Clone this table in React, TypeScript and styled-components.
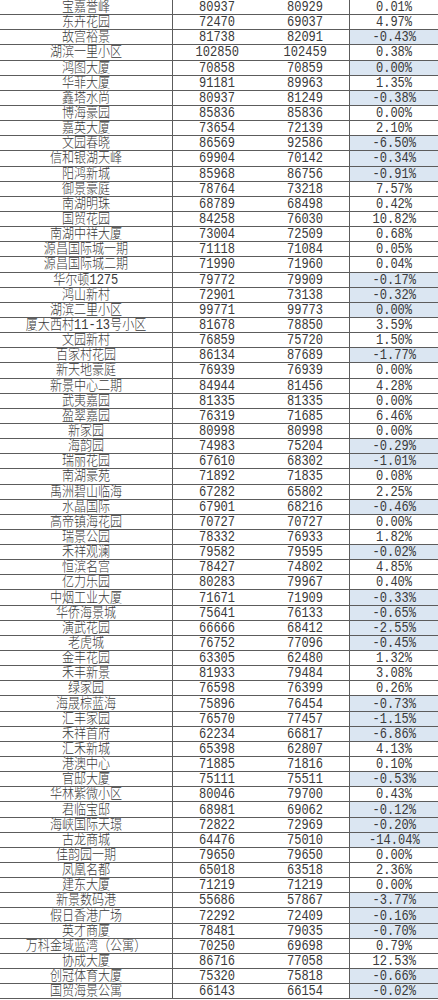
import styled, { createGlobalStyle } from 'styled-components';

const GlobalStyle = createGlobalStyle`
  html, body {
    margin: 0;
    padding: 0;
    background: #ffffff;
  }
  body {
    font-family: "Liberation Mono", "Noto Sans CJK SC", monospace;
    color: #3a3a3a;
  }
`;

type PriceRow = [string, number, number, string];

const rows: PriceRow[] = [
  ['宝嘉誉峰', 80937, 80929, '0.01%'],
  ['东卉花园', 72470, 69037, '4.97%'],
  ['故宫裕景', 81738, 82091, '-0.43%'],
  ['湖滨一里小区', 102850, 102459, '0.38%'],
  ['鸿图大厦', 70858, 70859, '0.00%'],
  ['华菲大厦', 91181, 89963, '1.35%'],
  ['鑫塔水尚', 80937, 81249, '-0.38%'],
  ['博海豪园', 85836, 85836, '0.00%'],
  ['嘉英大厦', 73654, 72139, '2.10%'],
  ['文园春晓', 86569, 92586, '-6.50%'],
  ['信和银湖天峰', 69904, 70142, '-0.34%'],
  ['阳鸿新城', 85968, 86756, '-0.91%'],
  ['御景豪庭', 78764, 73218, '7.57%'],
  ['南湖明珠', 68789, 68498, '0.42%'],
  ['国贸花园', 84258, 76030, '10.82%'],
  ['南湖中祥大厦', 73004, 72509, '0.68%'],
  ['源昌国际城一期', 71118, 71084, '0.05%'],
  ['源昌国际城二期', 71990, 71960, '0.04%'],
  ['华尔顿1275', 79772, 79909, '-0.17%'],
  ['鸿山新村', 72901, 73138, '-0.32%'],
  ['湖滨二里小区', 99771, 99773, '0.00%'],
  ['厦大西村11-13号小区', 81678, 78850, '3.59%'],
  ['文园新村', 76859, 75720, '1.50%'],
  ['百家村花园', 86134, 87689, '-1.77%'],
  ['新天地豪庭', 76939, 76939, '0.00%'],
  ['新景中心二期', 84944, 81456, '4.28%'],
  ['武夷嘉园', 81335, 81335, '0.00%'],
  ['盈翠嘉园', 76319, 71685, '6.46%'],
  ['新家园', 80998, 80998, '0.00%'],
  ['海韵园', 74983, 75204, '-0.29%'],
  ['瑞丽花园', 67610, 68302, '-1.01%'],
  ['南湖豪苑', 71892, 71835, '0.08%'],
  ['禹洲碧山临海', 67282, 65802, '2.25%'],
  ['水晶国际', 67901, 68216, '-0.46%'],
  ['高帝镇海花园', 70727, 70727, '0.00%'],
  ['瑞景公园', 78332, 76933, '1.82%'],
  ['禾祥观澜', 79582, 79595, '-0.02%'],
  ['恒滨名宫', 78427, 74802, '4.85%'],
  ['亿力乐园', 80283, 79967, '0.40%'],
  ['中烟工业大厦', 71671, 71909, '-0.33%'],
  ['华侨海景城', 75641, 76133, '-0.65%'],
  ['演武花园', 66666, 68412, '-2.55%'],
  ['老虎城', 76752, 77096, '-0.45%'],
  ['金丰花园', 63305, 62480, '1.32%'],
  ['禾丰新景', 81933, 79484, '3.08%'],
  ['绿家园', 76598, 76399, '0.26%'],
  ['海晟棕蓝海', 75896, 76454, '-0.73%'],
  ['汇丰家园', 76570, 77457, '-1.15%'],
  ['禾祥首府', 62234, 66817, '-6.86%'],
  ['汇禾新城', 65398, 62807, '4.13%'],
  ['港澳中心', 71885, 71816, '0.10%'],
  ['官邸大厦', 75111, 75511, '-0.53%'],
  ['华林紫微小区', 80046, 79700, '0.43%'],
  ['君临宝邸', 68981, 69062, '-0.12%'],
  ['海峡国际天璟', 72822, 72969, '-0.20%'],
  ['古龙商城', 64476, 75010, '-14.04%'],
  ['佳韵园一期', 79650, 79650, '0.00%'],
  ['凤凰名都', 65018, 63518, '2.36%'],
  ['建东大厦', 71219, 71219, '0.00%'],
  ['新景数码港', 55686, 57867, '-3.77%'],
  ['假日香港广场', 72292, 72409, '-0.16%'],
  ['英才商厦', 78481, 79035, '-0.70%'],
  ['万科金域蓝湾（公寓）', 70250, 69698, '0.79%'],
  ['协成大厦', 86716, 77058, '12.53%'],
  ['创冠体育大厦', 75320, 75818, '-0.66%'],
  ['国贸海景公寓', 66143, 66154, '-0.02%'],
];

const Sheet = styled.div`
  width: 438px;
  height: 1000px;
  overflow: hidden;
  display: flex;
  flex-direction: column;
`;

const Row = styled.div`
  display: grid;
  grid-template-columns: 173px 88px 89px 1fr;
  height: calc(1000px / 66);
  box-sizing: border-box;
  border-bottom: 1px solid #5c5c5c;
  flex-shrink: 0;
`;

const Cell = styled.div<{ $divider?: boolean; $highlight?: boolean }>`
  display: flex;
  align-items: center;
  justify-content: center;
  box-sizing: border-box;
  overflow: hidden;
  border-right: ${({ $divider }) => ($divider ? '1px solid #5c5c5c' : 'none')};
  background: ${({ $highlight }) => ($highlight ? '#dbe6f2' : 'transparent')};
`;

const Text = styled.span`
  display: inline-block;
  font-size: 14px;
  font-weight: 300;
  line-height: 14px;
  white-space: nowrap;
  transform: scaleX(0.86);
  transform-origin: center;
`;

export default function App() {
  return (
    <>
      <GlobalStyle />
      <Sheet>
        {rows.map(([name, current, previous, change]) => (
          <Row key={name}>
            <Cell $divider>
              <Text>{name}</Text>
            </Cell>
            <Cell>
              <Text>{current}</Text>
            </Cell>
            <Cell $divider>
              <Text>{previous}</Text>
            </Cell>
            <Cell $highlight={current < previous}>
              <Text>{change}</Text>
            </Cell>
          </Row>
        ))}
      </Sheet>
    </>
  );
}
